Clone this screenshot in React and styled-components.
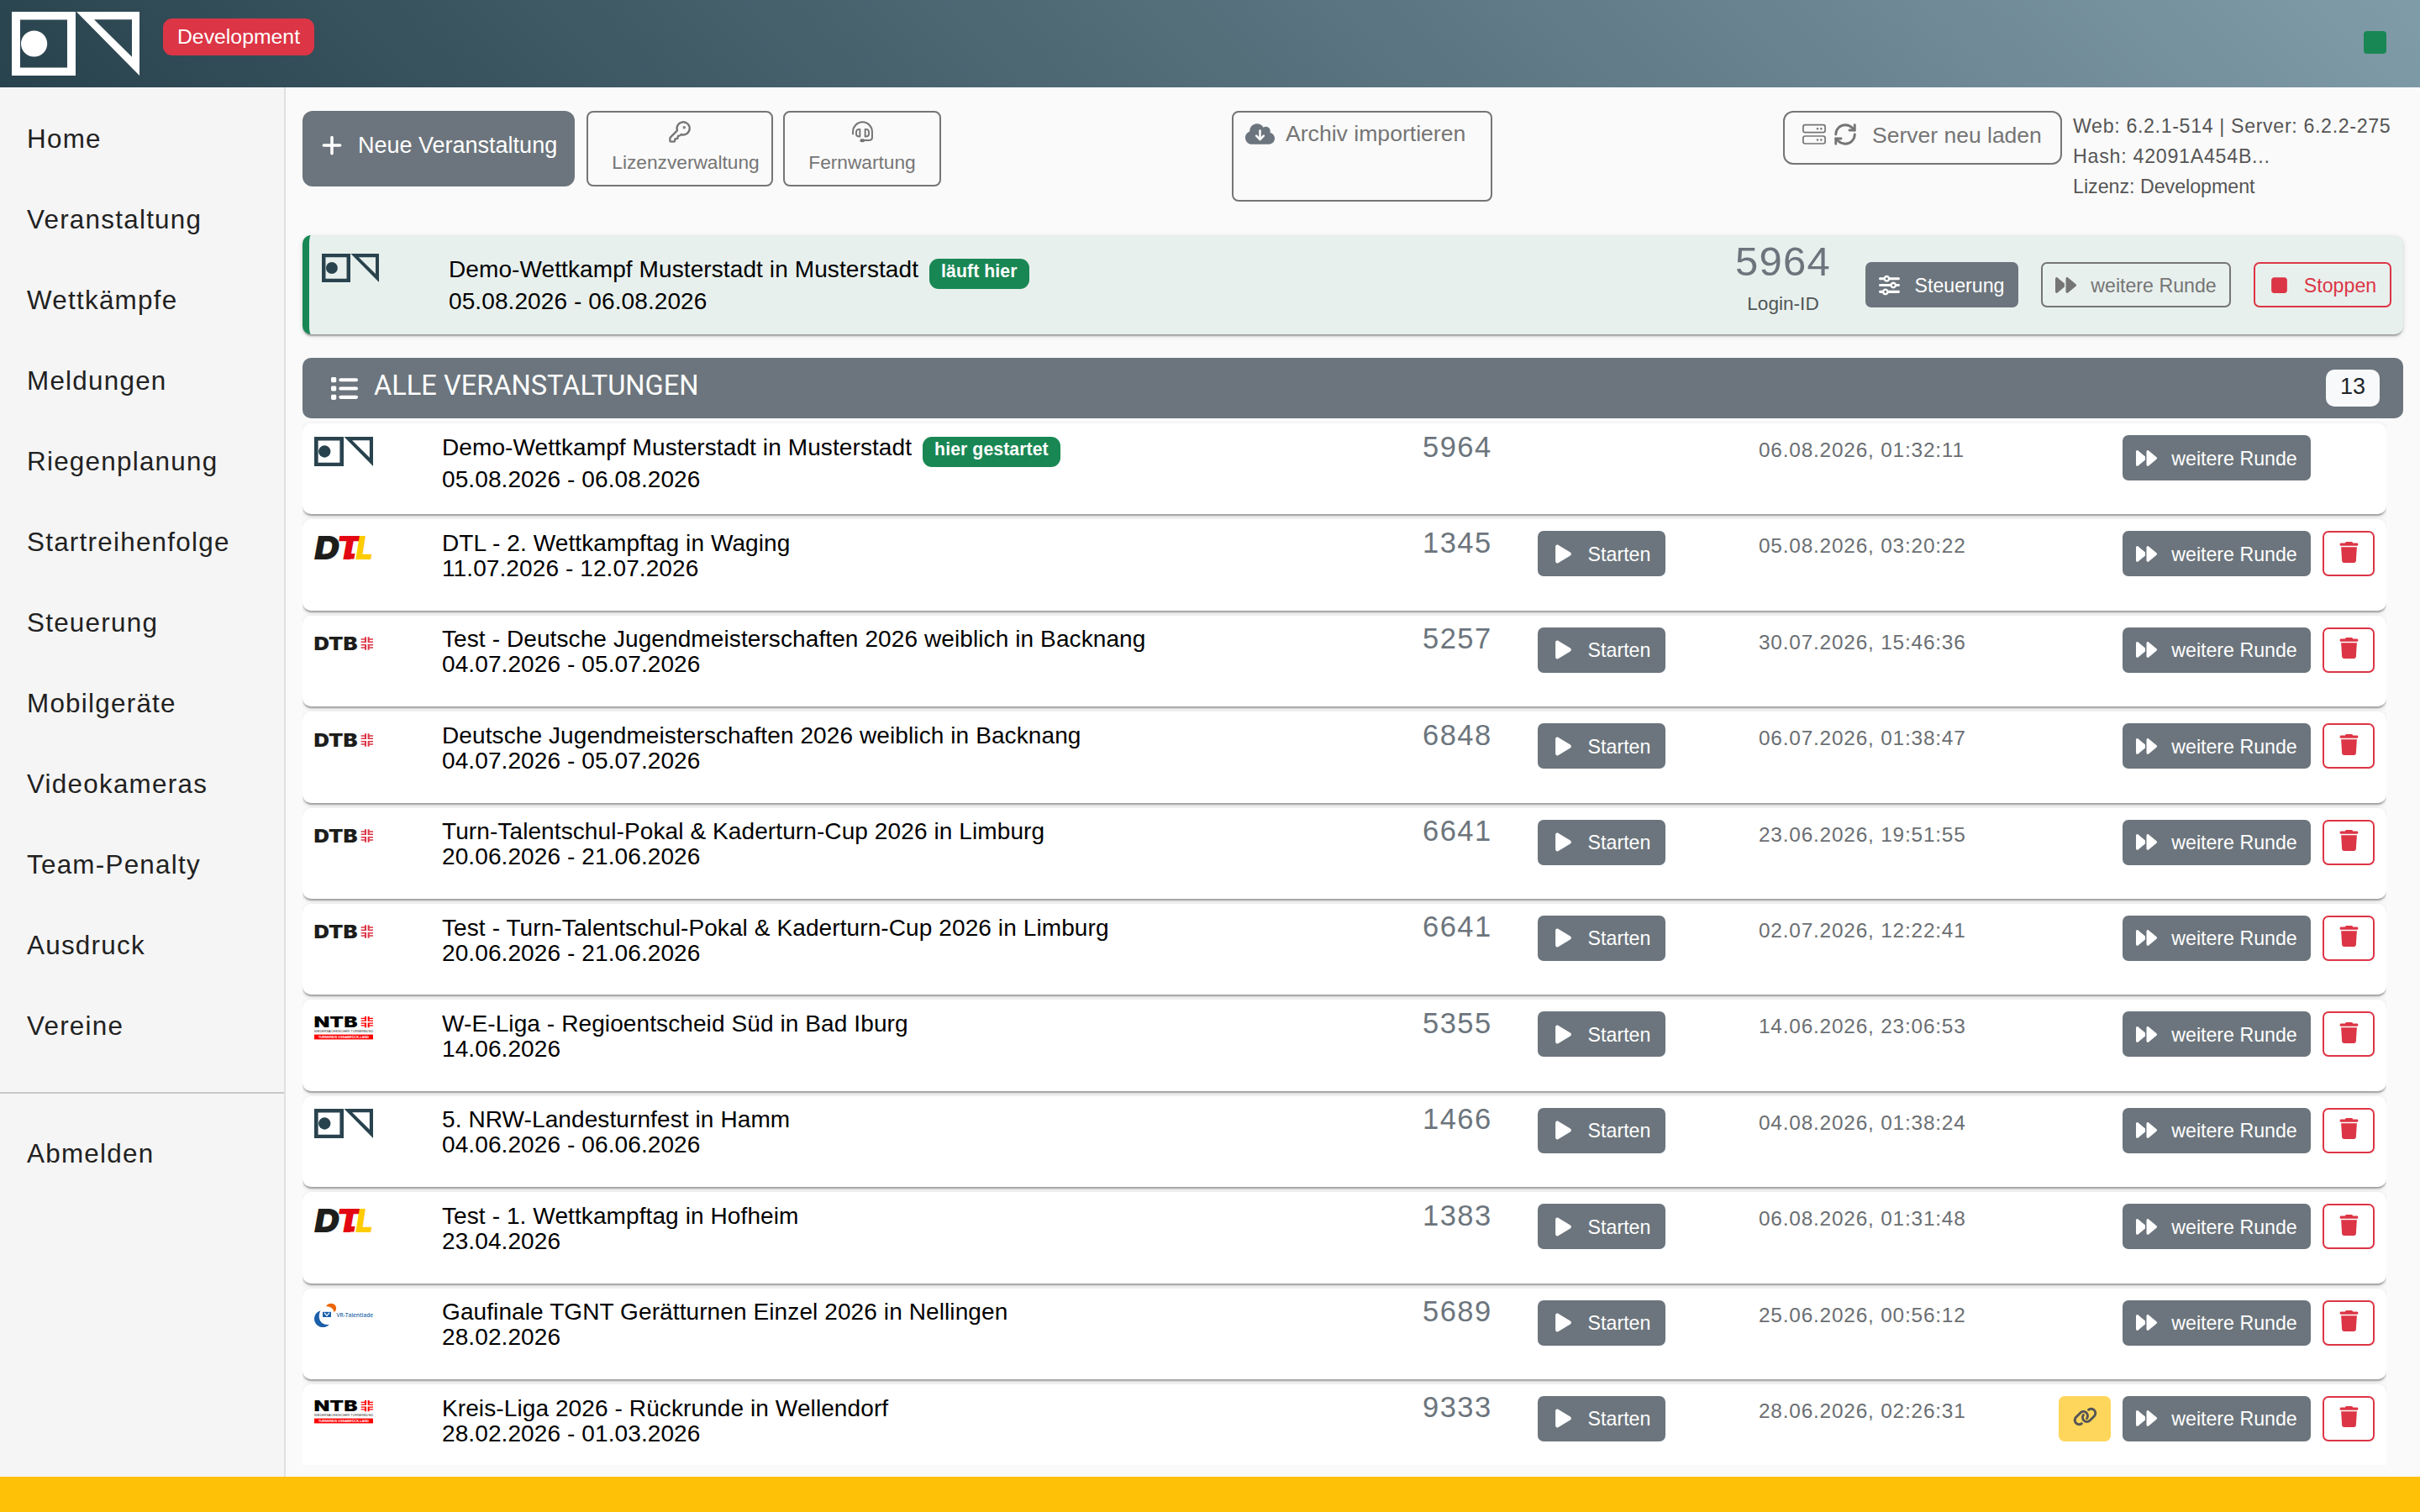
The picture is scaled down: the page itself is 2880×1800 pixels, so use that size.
import * as React from "react";
import styled, { createGlobalStyle } from "styled-components";
import {
  FaPlus,
  FaForward,
  FaPlay,
  FaTrash,
  FaSliders,
  FaList,
  FaStop,
  FaCloudArrowDown,
  FaLink,
} from "react-icons/fa6";
import { KeyRound, RefreshCw } from "lucide-react";

const menu = [
  "Home",
  "Veranstaltung",
  "Wettkämpfe",
  "Meldungen",
  "Riegenplanung",
  "Startreihenfolge",
  "Steuerung",
  "Mobilgeräte",
  "Videokameras",
  "Team-Penalty",
  "Ausdruck",
  "Vereine",
];

const events = [
  { logo: "on", name: "Demo-Wettkampf Musterstadt in Musterstadt", days: "05.08.2026 - 06.08.2026", id: "5964", date: "06.08.2026, 01:32:11", running: true },
  { logo: "dtl", name: "DTL - 2. Wettkampftag in Waging", days: "11.07.2026 - 12.07.2026", id: "1345", date: "05.08.2026, 03:20:22" },
  { logo: "dtb", name: "Test - Deutsche Jugendmeisterschaften 2026 weiblich in Backnang", days: "04.07.2026 - 05.07.2026", id: "5257", date: "30.07.2026, 15:46:36" },
  { logo: "dtb", name: "Deutsche Jugendmeisterschaften 2026 weiblich in Backnang", days: "04.07.2026 - 05.07.2026", id: "6848", date: "06.07.2026, 01:38:47" },
  { logo: "dtb", name: "Turn-Talentschul-Pokal & Kaderturn-Cup 2026 in Limburg", days: "20.06.2026 - 21.06.2026", id: "6641", date: "23.06.2026, 19:51:55" },
  { logo: "dtb", name: "Test - Turn-Talentschul-Pokal & Kaderturn-Cup 2026 in Limburg", days: "20.06.2026 - 21.06.2026", id: "6641", date: "02.07.2026, 12:22:41" },
  { logo: "ntb", name: "W-E-Liga - Regioentscheid Süd in Bad Iburg", days: "14.06.2026", id: "5355", date: "14.06.2026, 23:06:53" },
  { logo: "on", name: "5. NRW-Landesturnfest in Hamm", days: "04.06.2026 - 06.06.2026", id: "1466", date: "04.08.2026, 01:38:24" },
  { logo: "dtl", name: "Test - 1. Wettkampftag in Hofheim", days: "23.04.2026", id: "1383", date: "06.08.2026, 01:31:48" },
  { logo: "vr", name: "Gaufinale TGNT Gerätturnen Einzel 2026 in Nellingen", days: "28.02.2026", id: "5689", date: "25.06.2026, 00:56:12" },
  { logo: "ntb", name: "Kreis-Liga 2026 - Rückrunde in Wellendorf", days: "28.02.2026 - 01.03.2026", id: "9333", date: "28.06.2026, 02:26:31", linked: true },
];

const OnLogo = ({ width, height }) => (
  <svg width={width} height={height} viewBox="0 0 152 76" fill="currentColor">
    <path fillRule="evenodd" d="M0 0h76v76H0zM10 9.5v57h56v-57z" />
    <circle cx="26.6" cy="38" r="15.6" />
    <path fillRule="evenodd" d="M77 0h75v76zM98 9.3l45 44.5V9.3z" />
  </svg>
);

const Turner = ({ x, y, color }) => (
  <g transform={`translate(${x} ${y})`} fill={color}>
    <path d="M4.400 0h2v6.800H0V5.200h4.400zM0 2h4.400v1.500H0z" />
    <path d="M8 0h2v5.200h4.400v1.600H8zM10 2h4.400v1.500H10z" />
    <path d="M4.400 15.400h2V8.600H0v1.600h4.400zM0 11.900h4.400v1.500H0z" />
    <path d="M8 15.400h2v-5.200h4.400V8.600H8zM10 11.900h4.400v1.500H10z" />
  </g>
);

const DtlLogo = () => (
  <svg width="70" height="36" viewBox="0 0 70 36">
    <g fontFamily="Inter" fontWeight="900" fontStyle="italic" fontSize="39">
      <text x="0" y="31.6" textLength="30" lengthAdjust="spacingAndGlyphs" fill="#1d1d1b">D</text>
      <text x="26" y="31.6" textLength="29" lengthAdjust="spacingAndGlyphs" fill="#e30613">T</text>
      <text x="49.5" y="31.6" textLength="20.5" lengthAdjust="spacingAndGlyphs" fill="#ffcc00">L</text>
    </g>
    <path d="M37 25h11.500l-1.200 6.600H36z" fill="#e30613" />
  </svg>
);

const DtbLogo = () => (
  <svg width="70" height="34" viewBox="0 0 70 34">
    <text x="-0.5" y="25.6" fontFamily="Inter" fontWeight="900" fontSize="21" textLength="52" lengthAdjust="spacingAndGlyphs" fill="#1d1d1b">DTB</text>
    <Turner x="55.6" y="10.3" color="#dc3545" />
  </svg>
);

const NtbLogo = () => (
  <svg width="70" height="34" viewBox="0 0 70 34">
    <text x="-0.5" y="17" fontFamily="Inter" fontWeight="900" fontSize="17.5" textLength="52" lengthAdjust="spacingAndGlyphs">NTB</text>
    <g transform="translate(0 4) scale(1 .86)">
      <Turner x="55.6" y="0" color="#ff0000" />
    </g>
    <text x="0" y="22.5" fontFamily="Liberation Sans" fontSize="3.6" textLength="70" fill="#222">NIEDERSÄCHSISCHER TURNERBUND</text>
    <rect y="25.6" width="70" height="5.8" fill="#ff0000" />
    <text x="5" y="29.9" fontFamily="Liberation Sans" fontWeight="700" fontSize="3.8" textLength="60" fill="#fff">TURNKREIS OSNABRÜCK-LAND</text>
  </svg>
);

const VrLogo = () => (
  <svg width="70" height="34" viewBox="0 0 70 34">
    <path d="M14 6.2C16.5 1.2 25 1.8 26 7.2c.5 2.5-.5 4.5-2.5 6C23 8.700 19 6.200 14 6.200z" fill="#ec6608" />
    <path d="M7.5 11.2C1 13.2-1.5 19.7 1 25.2c3 6.5 12 8 17 2.5-6 1-11-2-12-7.5-.6-3.5 0-6.5 1.5-9z" fill="#1b5faa" />
    <rect x="10" y="12.8" width="10" height="6.2" fill="#1b5faa" />
    <path d="M12 13.8l3 3.5 3-3.5" stroke="#fff" strokeWidth="1.2" fill="none" />
    <text x="26.5" y="18.8" fontFamily="Open Sans" fontWeight="600" fontSize="7" textLength="43.5" lengthAdjust="spacingAndGlyphs" fill="#2f6cab">VR-Talentiade</text>
  </svg>
);

const EventLogo = ({ kind }) => {
  if (kind === "dtl") return <DtlLogo />;
  if (kind === "dtb") return <DtbLogo />;
  if (kind === "ntb") return <NtbLogo />;
  if (kind === "vr") return <VrLogo />;
  return <OnLogo width={70} height={35} />;
};

const HeadsetIcon = () => (
  <svg width="25" height="25" viewBox="0 0 24 24" fill="none" stroke="currentColor" strokeWidth="1.9">
    <path d="M1 15v-3.2a11 11 0 0 1 22 0v6.7a3 3 0 0 1-3 3h-7" />
    <path d="M9 9v8.3H8c-2 0-3.3-1.5-3.3-4.1S6 9 8 9zM15 9v8.3h1c2 0 3.3-1.5 3.3-4.1S18 9 16 9z" strokeLinejoin="round" />
    <rect x="9" y="20" width="5.5" height="3.8" rx="1.9" fill="currentColor" stroke="none" />
  </svg>
);

const ServerIcon = () => (
  <svg width="28" height="26" viewBox="0 0 28 26" fill="none" stroke="currentColor" strokeWidth="1.7">
    <rect x=".9" y="1.7" width="26.2" height="9" rx="2.4" />
    <rect x=".9" y="15" width="26.2" height="9" rx="2.4" />
    <g fill="currentColor" stroke="none">
      <circle cx="18" cy="6.2" r="1.2" />
      <circle cx="22.3" cy="6.2" r="1.2" />
      <circle cx="18" cy="19.5" r="1.2" />
      <circle cx="22.3" cy="19.5" r="1.2" />
    </g>
  </svg>
);

export default function App() {
  return (
    <Page>
      <GlobalStyle />
      <Header>
        <Brand>
          <OnLogo width={152} height={76} />
          <StageBadge>Development</StageBadge>
        </Brand>
        <StatusLight />
      </Header>
      <Body>
        <Sidebar>
          <Menu>
            {menu.map((item) => (
              <MenuItem key={item}>{item}</MenuItem>
            ))}
          </Menu>
          <Divider />
          <MenuItem>Abmelden</MenuItem>
        </Sidebar>
        <Main>
          <Toolbar>
            <ToolGroup>
              <NewButton>
                <FaPlus size={28} />
                Neue Veranstaltung
              </NewButton>
              <StackButton $width={222} $shift={14}>
                <KeyRound size={28} strokeWidth={2} />
                <span>Lizenzverwaltung</span>
              </StackButton>
              <StackButton $width={188} $shift={0}>
                <HeadsetIcon />
                <span>Fernwartung</span>
              </StackButton>
            </ToolGroup>
            <ImportButton>
              <FaCloudArrowDown size={35} />
              Archiv importieren
            </ImportButton>
            <ServerGroup>
              <ReloadButton>
                <ServerIcon />
                <RefreshCw size={30} strokeWidth={2.3} />
                <span>Server neu laden</span>
              </ReloadButton>
              <Versions>
                <VersionLine $track={0.65}>Web: 6.2.1-514 | Server: 6.2.2-275</VersionLine>
                <VersionLine $track={0.75}>Hash: 42091A454B...</VersionLine>
                <VersionLine $track={0}>Lizenz: Development</VersionLine>
              </Versions>
            </ServerGroup>
          </Toolbar>

          <ActiveCard>
            <ActiveLogo>
              <OnLogo width={70} height={34} />
            </ActiveLogo>
            <ActiveTitle>
              Demo-Wettkampf Musterstadt in Musterstadt
              <Badge>läuft hier</Badge>
              <div>05.08.2026 - 06.08.2026</div>
            </ActiveTitle>
            <Login>
              <LoginNumber>5964</LoginNumber>
              <LoginLabel>Login-ID</LoginLabel>
            </Login>
            <ActiveButtons>
              <Button $width={182}>
                <FaSliders />
                <span>Steuerung</span>
              </Button>
              <Button $width={226} $outline="#757575">
                <FaForward />
                <span>weitere Runde</span>
              </Button>
              <Button $width={164} $outline="#dc3545">
                <FaStop />
                <span>Stoppen</span>
              </Button>
            </ActiveButtons>
          </ActiveCard>

          <ListHeader>
            <FaList size={33} />
            <ListTitle>ALLE VERANSTALTUNGEN</ListTitle>
            <Count>13</Count>
          </ListHeader>
          <List>
            {events.map((e, i) => (
              <Row key={i}>
                <RowLogo>
                  <EventLogo kind={e.logo} />
                </RowLogo>
                <Title>
                  {e.name}
                  {e.running && <Badge>hier gestartet</Badge>}
                  <div>{e.days}</div>
                </Title>
                <EventNumber>{e.id}</EventNumber>
                <RowCell>
                  {!e.running && (
                    <Button $width={152}>
                      <FaPlay />
                      <span>Starten</span>
                    </Button>
                  )}
                </RowCell>
                <DateCell>{e.date}</DateCell>
                <Actions $inset={e.running}>
                  {e.linked && (
                    <LinkButton>
                      <FaLink size={29} />
                    </LinkButton>
                  )}
                  <Button $width={224}>
                    <FaForward />
                    <span>weitere Runde</span>
                  </Button>
                  {!e.running && (
                    <DeleteButton>
                      <FaTrash size={25} />
                    </DeleteButton>
                  )}
                </Actions>
              </Row>
            ))}
          </List>
        </Main>
      </Body>
      <Footer />
    </Page>
  );
}

const GlobalStyle = createGlobalStyle`
  * {
    box-sizing: border-box;
  }

  body {
    margin: 0;
    font-family: "Liberation Sans", sans-serif;
    background: #fafafa;
  }

  svg {
    flex: none;
    display: block;
    overflow: visible;
  }
`;

const cardShadow = `
  box-shadow: 0 4px 2px -2px rgba(0, 0, 0, 0.2), 0 2px 2px rgba(0, 0, 0, 0.14),
    0 2px 6px rgba(0, 0, 0, 0.12);
`;

const Page = styled.div`
  width: 2880px;
  height: 1800px;
  display: flex;
  flex-direction: column;
  overflow: hidden;
`;

const Header = styled.header`
  height: 104px;
  flex: none;
  display: flex;
  justify-content: space-between;
  padding: 14px 40px 0 14px;
  color: #fff;
  background: linear-gradient(45deg, #29434e, #546e7a, #819ca9);
`;

const Brand = styled.div`
  display: flex;
  align-items: flex-start;
  gap: 28px;
`;

const StageBadge = styled.div`
  width: 180px;
  height: 44px;
  margin-top: 8px;
  border-radius: 11px;
  background: #dc3545;
  font-size: 24.8px;
  line-height: 43px;
  text-align: center;
`;

const StatusLight = styled.div`
  width: 27px;
  height: 27px;
  margin-top: 23px;
  border-radius: 4px;
  background: #198754;
`;

const Body = styled.div`
  flex: 1;
  min-height: 0;
  display: flex;
`;

const Sidebar = styled.nav`
  width: 340px;
  flex: none;
  padding-top: 14px;
  background: #f5f5f5;
  border-right: 2px solid #e0e0e0;
`;

const Menu = styled.div`
  margin-bottom: 30px;
`;

const MenuItem = styled.div`
  height: 96px;
  padding-left: 32px;
  line-height: 96px;
  font-size: 31.4px;
  letter-spacing: 1.25px;
  color: #212121;
`;

const Divider = styled.div`
  height: 2px;
  margin-bottom: 24px;
  background: #c8c8c8;
`;

const Main = styled.main`
  flex: 1;
  min-width: 0;
  display: flex;
  flex-direction: column;
  padding: 28px 20px 14px;
  background: #fafafa;
`;

const Toolbar = styled.div`
  height: 108px;
  flex: none;
  display: flex;
  align-items: flex-start;
  padding-right: 14px;
`;

const ToolGroup = styled.div`
  width: 1106px;
  display: flex;
  gap: 12px;
`;

const NewButton = styled.div`
  width: 324px;
  height: 90px;
  margin-right: 2px;
  display: flex;
  align-items: center;
  gap: 17px;
  padding: 0 0 8px 21px;
  border-radius: 12px;
  background: #6c757d;
  color: #fff;
  font-size: 27px;
`;

const StackButton = styled.div`
  width: ${(p) => p.$width}px;
  height: 90px;
  display: flex;
  flex-direction: column;
  align-items: center;
  padding-top: 9px;
  border: 2px solid #757575;
  border-radius: 8px;
  color: #757575;
  font-size: 22.7px;

  & svg {
    height: 28px;
  }

  & span {
    padding-left: ${(p) => p.$shift}px;
    margin-top: 8px;
    line-height: 28px;
  }
`;

const ImportButton = styled.div`
  width: 310px;
  height: 108px;
  display: flex;
  align-items: flex-start;
  gap: 13px;
  padding: 8px 0 0 14px;
  border: 2px solid #757575;
  border-radius: 8px;
  color: #757575;
  font-size: 26.6px;
  line-height: 34px;

  & svg {
    color: #6c757d;
  }
`;

const ServerGroup = styled.div`
  flex: 1;
  display: flex;
  justify-content: flex-end;
`;

const ReloadButton = styled.div`
  width: 332px;
  height: 64px;
  display: flex;
  align-items: center;
  gap: 8px;
  padding: 0 0 8px 21px;
  border: 2px solid #757575;
  border-radius: 12px;
  color: #757575;
  font-size: 26.5px;

  & span {
    padding: 2px 0 0 9px;
  }
`;

const Versions = styled.div`
  width: 392px;
  padding-left: 13px;
  color: #555;
  font-size: 23.2px;
`;

const VersionLine = styled.div`
  line-height: 36px;
  white-space: nowrap;
  letter-spacing: ${(p) => p.$track}px;
`;

const ActiveCard = styled.section`
  height: 118px;
  flex: none;
  display: flex;
  margin-top: 40px;
  padding-left: 14px;
  border-left: 8px solid #198754;
  border-radius: 10px;
  background: #e8f0ed;
  ${cardShadow}
`;

const ActiveLogo = styled.div`
  width: 152px;
  padding-top: 22px;
  color: #29434e;
`;

const Title = styled.div`
  padding-top: 13.6px;
  font-size: 28px;
  line-height: 30px;
  letter-spacing: 0.1px;
  color: #000;
  white-space: nowrap;
`;

const ActiveTitle = styled(Title)`
  flex: 1;
  padding-top: 26px;
`;

const Badge = styled.span`
  display: inline-block;
  margin-left: 13px;
  padding: 0 14px 6px;
  border-radius: 11px;
  background: #198754;
  color: #fff;
  font-size: 21.2px;
  font-weight: 700;
`;

const Login = styled.div`
  width: 160px;
  padding-top: 3px;
  text-align: center;
`;

const LoginNumber = styled.div`
  font-size: 49px;
  line-height: 57px;
  letter-spacing: 1.3px;
  color: #6c757d;
`;

const LoginLabel = styled.div`
  margin-top: 6px;
  font-size: 22.6px;
  line-height: 32px;
  color: #4f5656;
`;

const ActiveButtons = styled.div`
  display: flex;
  gap: 27px;
  padding: 32px 14px 0 18px;
`;

const Button = styled.div`
  width: ${(p) => p.$width}px;
  height: 54px;
  display: flex;
  align-items: center;
  justify-content: center;
  gap: 17px;
  border: 2px solid ${(p) => p.$outline || "#6c757d"};
  border-radius: 7px;
  background: ${(p) => (p.$outline ? "transparent" : "#6c757d")};
  color: ${(p) => p.$outline || "#fff"};
  font-size: 23.2px;
  white-space: nowrap;

  & svg {
    width: 25px;
    height: 25px;
  }

  & span {
    padding-top: 2px;
  }
`;

const ListHeader = styled.div`
  height: 72px;
  flex: none;
  display: flex;
  align-items: center;
  margin-top: 28px;
  padding: 0 28px 0 33px;
  border-radius: 10px;
  background: #6c757d;
  color: #fff;
`;

const ListTitle = styled.div`
  flex: 1;
  padding: 0 0 7px 19px;
  font-family: Roboto, sans-serif;
  font-size: 32.6px;
  font-weight: 400;
`;

const Count = styled.div`
  width: 64px;
  height: 44px;
  margin-bottom: 1px;
  border-radius: 10px;
  background: #f8f9fa;
  color: #212529;
  font-size: 27px;
  line-height: 40px;
  text-align: center;
`;

const List = styled.div`
  width: 2480px;
  flex: 1;
  min-height: 0;
  padding-top: 6px;
  overflow: hidden;
`;

const Row = styled.div`
  height: 108.4px;
  margin-bottom: 6px;
  display: grid;
  grid-template-columns: 152px 1167px 137px 263px 260px 1fr;
  padding: 0 14px;
  border-radius: 10px;
  background: #fff;
  ${cardShadow}
`;

const RowLogo = styled.div`
  padding-top: 15.5px;
  color: #29434e;
`;

const EventNumber = styled.div`
  padding-top: 7.5px;
  font-size: 34.5px;
  line-height: 40px;
  letter-spacing: 1.5px;
  color: #6c757d;
`;

const RowCell = styled.div`
  padding-top: 14px;
`;

const DateCell = styled.div`
  padding-top: 17px;
  font-size: 24.4px;
  line-height: 30px;
  letter-spacing: 0.8px;
  color: #6a6e72;
`;

const Actions = styled.div`
  display: flex;
  justify-content: flex-end;
  gap: 14px;
  padding: 14px ${(p) => (p.$inset ? 76 : 0)}px 0 0;
`;

const IconButton = styled.div`
  width: 62px;
  height: 54px;
  display: flex;
  align-items: center;
  justify-content: center;
  padding-bottom: 4px;
  border-radius: 7px;
`;

const DeleteButton = styled(IconButton)`
  border: 2px solid #dc3545;
  color: #dc3545;
`;

const LinkButton = styled(IconButton)`
  background: #ffd65c;
  color: #555;
`;

const Footer = styled.footer`
  height: 42px;
  flex: none;
  background: #ffc107;
`;
